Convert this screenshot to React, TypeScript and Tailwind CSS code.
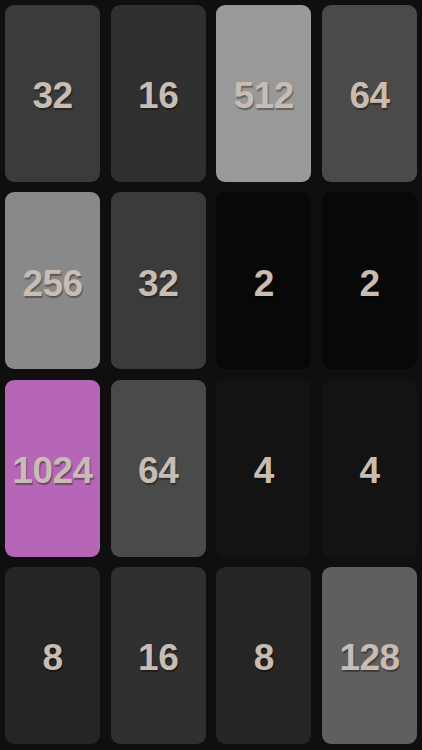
import React from "react";

type Tile = { v: number; bg: string };

const tiles: Tile[] = [
  { v: 32, bg: "bg-[#3b3b3b]" },
  { v: 16, bg: "bg-[#303030]" },
  { v: 512, bg: "bg-[#999999]" },
  { v: 64, bg: "bg-[#4a4a4a]" },
  { v: 256, bg: "bg-[#898989]" },
  { v: 32, bg: "bg-[#3b3b3b]" },
  { v: 2, bg: "bg-[#080808]" },
  { v: 2, bg: "bg-[#080808]" },
  { v: 1024, bg: "bg-[#b566b7]" },
  { v: 64, bg: "bg-[#4a4a4a]" },
  { v: 4, bg: "bg-[#131313]" },
  { v: 4, bg: "bg-[#131313]" },
  { v: 8, bg: "bg-[#252525]" },
  { v: 16, bg: "bg-[#303030]" },
  { v: 8, bg: "bg-[#252525]" },
  { v: 128, bg: "bg-[#5f5f5f]" },
];

export default function App() {
  return (
    <div className="w-[422px] h-[750px] bg-[#0f0f0f] p-[5px]">
      <div className="grid grid-cols-4 grid-rows-[repeat(4,177px)] gap-x-[10.67px] gap-y-[10.33px]">
        {tiles.map((t, i) => (
          <div
            key={i}
            className={`${t.bg} rounded-[9px] flex items-center justify-center pt-[5px]`}
          >
            <span
              className="text-[37px] font-bold text-[#c8bcb3] tracking-[-0.5px] [text-shadow:1px_2px_1px_rgba(0,0,0,0.35)]"
              style={{ fontFamily: '"Liberation Sans", Arial, sans-serif' }}
            >
              {t.v}
            </span>
          </div>
        ))}
      </div>
    </div>
  );
}
